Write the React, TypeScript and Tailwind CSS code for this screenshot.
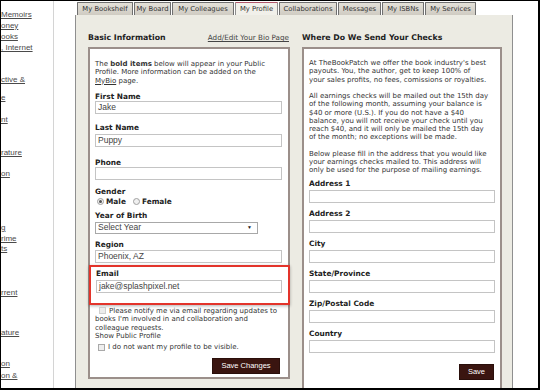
const tabs = [
  { label: "My Bookshelf", w: "w-[56px]", active: false },
  { label: "My Board", w: "w-[37px]", active: false },
  { label: "My Colleagues", w: "w-[62px]", active: false },
  { label: "My Profile", w: "w-[43px]", active: true },
  { label: "Collaborations", w: "w-[58px]", active: false },
  { label: "Messages", w: "w-[43px]", active: false },
  { label: "My ISBNs", w: "w-[42px]", active: false },
  { label: "My Services", w: "w-[51px]", active: false },
];

const sideLinks = [
  { text: "Memoirs", mt: "mt-[9px]" },
  { text: "oney", mt: "mt-[1px]" },
  { text: "ooks", mt: "mt-[1px]" },
  { text: ", Internet", mt: "mt-[1px]" },
  { text: "ctive &", mt: "mt-[22px]" },
  { text: "e", mt: "mt-[8px]" },
  { text: "nt", mt: "mt-[12px]" },
  { text: "rature", mt: "mt-[23px]" },
  { text: "on", mt: "mt-[11px]" },
  { text: "g", mt: "mt-[44px]" },
  { text: "rime", mt: "mt-[1px]" },
  { text: "ts", mt: "mt-0" },
  { text: "rrent", mt: "mt-[34px]" },
  { text: "ature", mt: "mt-[30px]" },
  { text: "on", mt: "mt-[21px]" },
  { text: "on &", mt: "mt-[2px]" },
];

function Label({ children, className = "" }: { children: React.ReactNode; className?: string }) {
  return <div className={`text-[7.4px] font-bold leading-[9px] text-[#222] ${className}`}>{children}</div>;
}

function Input({ value = "", className = "" }: { value?: string; className?: string }) {
  return (
    <div
      className={`h-[13px] border border-[#c4c4c4] bg-white px-[2px] font-['Liberation_Sans',Arial,sans-serif] text-[8.5px] leading-[11px] text-[#444] ${className}`}
    >
      {value}
    </div>
  );
}

function Radio({ checked }: { checked?: boolean }) {
  return (
    <span className="inline-flex h-[7px] w-[7px] items-center justify-center rounded-full border border-[#a0a0a0] bg-[#f0f0f0]">
      {checked && <span className="h-[3px] w-[3px] rounded-full bg-[#555]" />}
    </span>
  );
}

function Checkbox({ faded }: { faded?: boolean }) {
  return (
    <span
      className={`inline-block h-[7px] w-[7px] border ${faded ? "border-[#cfcfcf] bg-[#ececec]" : "border-[#a9a9a9] bg-[#eeeeee]"}`}
    />
  );
}

function RightField({ label }: { label: string }) {
  return (
    <div className="mt-[5.5px]">
      <Label>{label}</Label>
      <Input className="mt-[2.5px]" />
    </div>
  );
}

export default function App() {
  return (
    <div className="flex h-[390px] w-[540px] overflow-hidden border-t border-l border-r-2 border-b-2 border-black bg-white font-['DejaVu_Sans',Verdana,sans-serif] text-[#333]">
      <aside className="flex w-[53px] shrink-0 flex-col border-r border-[#d4d4d4] font-['Liberation_Sans',Arial,sans-serif] text-[8px] leading-[10px] text-[#4a4a4a]">
        {sideLinks.map((l, i) => (
          <a key={i} className={`${l.mt} whitespace-nowrap underline`}>
            {l.text}
          </a>
        ))}
      </aside>

      <main className="ml-[21px] flex w-[438px] shrink-0 flex-col">
        <nav className="mt-[1px] flex h-[13px] shrink-0 gap-[1px] pl-[2px]">
          {tabs.map((t) => (
            <div
              key={t.label}
              className={`${t.w} flex items-center justify-center rounded-t-[1px] border border-b-0 text-[6.8px] leading-none whitespace-nowrap ${
                t.active
                  ? "border-[#8d8d8d] border-t-[#b0566a] bg-[#f1f0ea] text-[#333]"
                  : "border-[#6f6f6f] bg-gradient-to-b from-[#e4e1d9] to-[#cfcbc2] text-[#333]"
              }`}
            >
              {t.label}
            </div>
          ))}
        </nav>

        <div className="flex min-h-0 flex-1 items-start gap-[12px] overflow-hidden border-l border-r border-[#8f8f8f] bg-[#ecebe3] pt-[18px] pl-[12px] pr-[10px]">
          {/* Basic Information */}
          <section className="w-[202px] shrink-0">
            <div className="flex h-[10px] items-center justify-between leading-[10px]">
              <h2 className="text-[7.8px] font-bold text-[#222]">Basic Information</h2>
              <a className="mr-[1px] text-[7.2px] text-[#444] underline">Add/Edit Your Bio Page</a>
            </div>
            <div className="mt-[4px] border-2 border-[#9b8f8a] bg-white pt-[11px] pr-[6px] pb-[3px] pl-[5px]">
              <p className="whitespace-nowrap text-[7px] leading-[8.25px]">
                The <b>bold items</b> below will appear in your Public
                <br />
                Profile. More information can be added on the
                <br />
                <a className="underline">MyBio</a> page.
              </p>

              <Label className="mt-[7px]">First Name</Label>
              <Input value="Jake" />

              <Label className="mt-[9.5px]">Last Name</Label>
              <Input value="Puppy" className="mt-[1.5px]" />

              <Label className="mt-[11px]">Phone</Label>
              <Input />

              <Label className="mt-[7.5px]">Gender</Label>
              <div className="mt-[1px] flex h-[9px] items-center gap-[2px] pl-[2px] text-[7.4px] font-bold text-[#222]">
                <Radio checked />
                <span>Male</span>
                <span className="ml-[5px] flex items-center gap-[2px]">
                  <Radio />
                  <span>Female</span>
                </span>
              </div>

              <Label className="mt-[5px]">Year of Birth</Label>
              <div className="mt-[1.5px] flex h-[12px] w-[163px] items-center justify-between border border-[#a8a8a8] bg-white pr-[5px] pl-[2px] font-['Liberation_Sans',Arial,sans-serif] text-[8.5px] text-[#444]">
                <span>Select Year</span>
                <span className="text-[5px] text-[#222]">▼</span>
              </div>

              <Label className="mt-[6.5px]">Region</Label>
              <Input value="Phoenix, AZ" className="mt-[0.5px]" />

              <div className="mt-[2px] -mr-[8px] -ml-[6px] border-2 border-[#e3342b] pt-[2.5px] pr-[6px] pb-[10px] pl-[5px] shadow-[0_1px_3px_rgba(0,0,0,0.3)]">
                <Label>Email</Label>
                <Input value="jake@splashpixel.net" className="mt-[1.5px]" />
              </div>

              <div className="mt-[1.5px] text-[7px] leading-[8.25px] whitespace-nowrap">
                <div className="flex h-[9px] items-center gap-[3px] pl-[4px]">
                  <Checkbox faded />
                  <span>Please notify me via email regarding updates to</span>
                </div>
                <div>books I'm involved in and collaboration and</div>
                <div>colleague requests.</div>
                <div>Show Public Profile</div>
                <div className="mt-[2px] flex h-[10px] items-center gap-[3px] pl-[3px]">
                  <Checkbox />
                  <span>I do not want my profile to be visible.</span>
                </div>
              </div>

              <div className="mt-[6px] flex justify-end pr-[2px]">
                <button className="h-[16px] w-[68px] border border-[#2a0f0b] bg-[#3a1510] font-['Liberation_Sans',Arial,sans-serif] text-[7.5px] text-white">
                  Save Changes
                </button>
              </div>
            </div>
          </section>

          {/* Where Do We Send Your Checks */}
          <section className="w-[200px] shrink-0">
            <div className="flex h-[10px] items-center leading-[10px]">
              <h2 className="text-[7.8px] font-bold text-[#222]">Where Do We Send Your Checks</h2>
            </div>
            <div className="mt-[4px] border-2 border-[#9b8f8a] bg-white pt-[10px] pr-[5px] pb-[10px] pl-[5px]">
              <div className="space-y-[8.25px] whitespace-nowrap text-[7px] leading-[8.25px]">
                <p>
                  At TheBookPatch we offer the book industry's best
                  <br />
                  payouts. You, the author, get to keep 100% of
                  <br />
                  your sales profits, no fees, comissions or royalties.
                </p>
                <p>
                  All earnings checks will be mailed out the 15th day
                  <br />
                  of the following month, assuming your balance is
                  <br />
                  $40 or more (U.S.). If you do not have a $40
                  <br />
                  balance, you will not receive your check until you
                  <br />
                  reach $40, and it will only be mailed the 15th day
                  <br />
                  of the month; no exceptions will be made.
                </p>
                <p>
                  Below please fill in the address that you would like
                  <br />
                  your earnings checks mailed to. This address will
                  <br />
                  only be used for the purpose of mailing earnings.
                </p>
              </div>

              <div className="mt-[4px]">
                <Label>Address 1</Label>
                <Input className="mt-[2.5px]" />
              </div>
              <RightField label="Address 2" />
              <RightField label="City" />
              <RightField label="State/Province" />
              <RightField label="Zip/Postal Code" />
              <RightField label="Country" />

              <div className="mt-[10.5px] flex justify-end pr-[1px]">
                <button className="h-[16px] w-[35px] border border-[#2a0f0b] bg-[#3a1510] font-['Liberation_Sans',Arial,sans-serif] text-[7.5px] text-white">
                  Save
                </button>
              </div>
            </div>
          </section>
        </div>
      </main>
    </div>
  );
}
